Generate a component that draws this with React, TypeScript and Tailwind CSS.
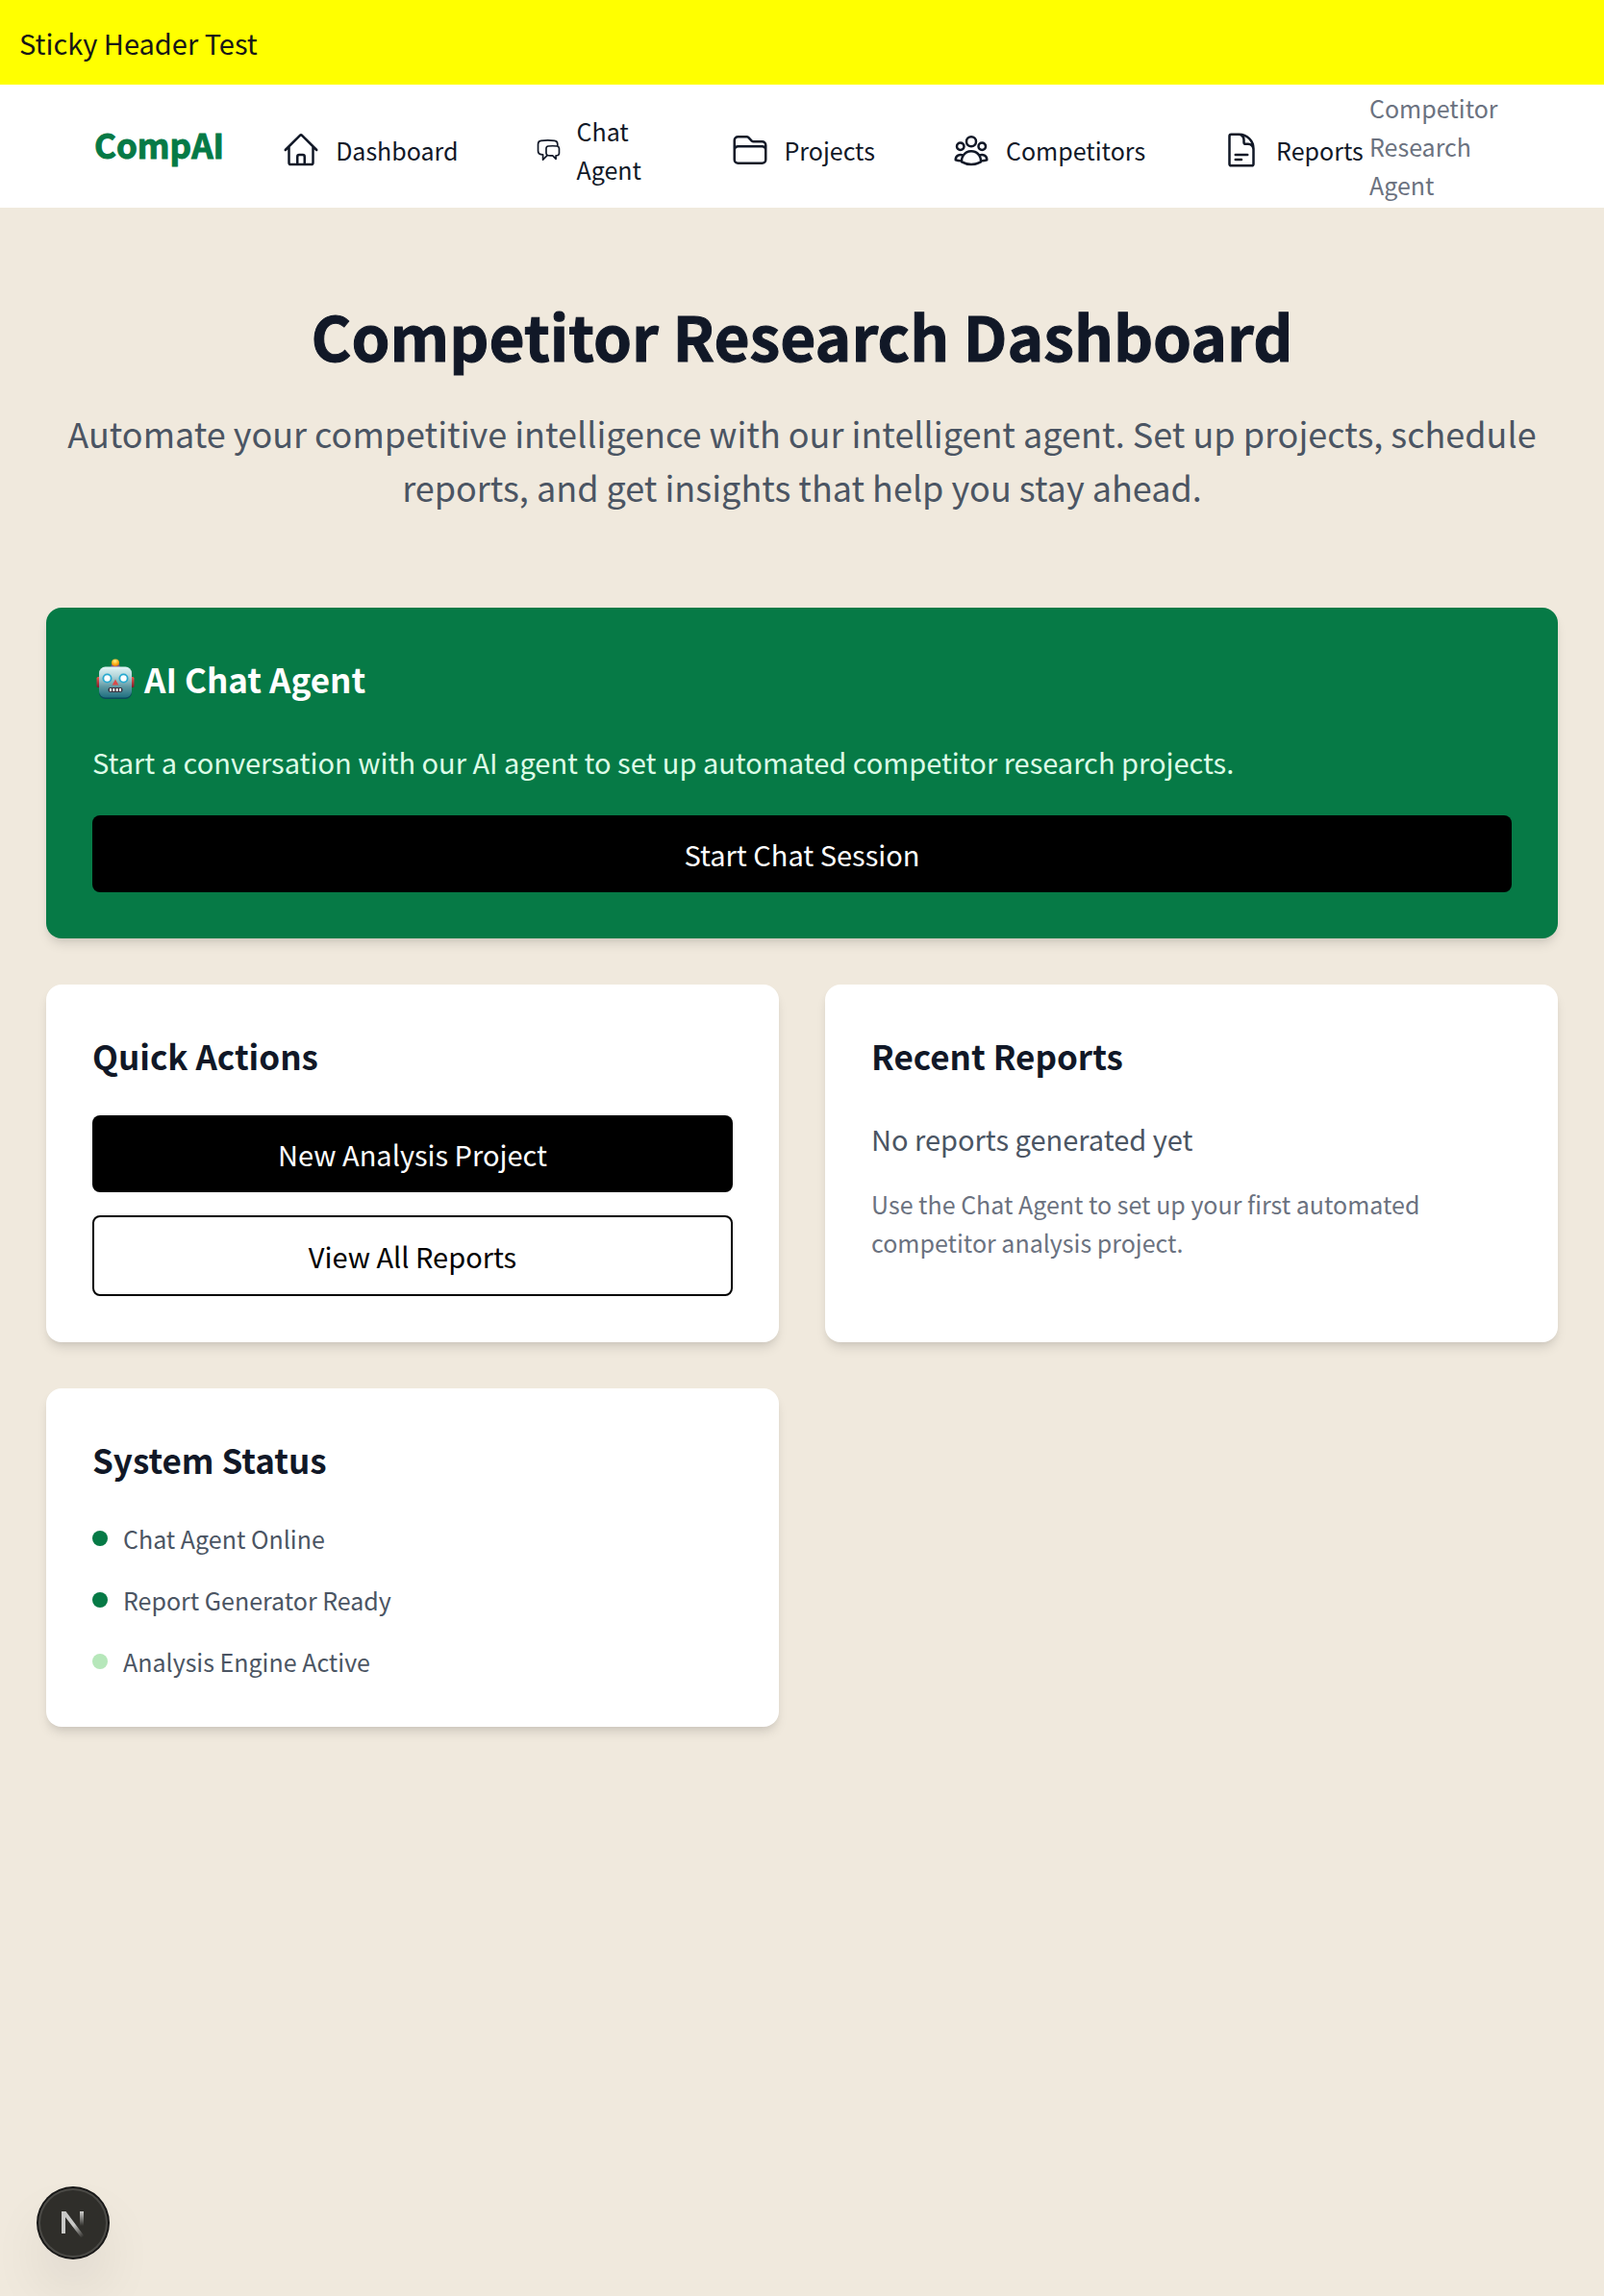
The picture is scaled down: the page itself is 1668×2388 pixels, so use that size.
import type { ReactNode } from "react";
import type { IconType } from "react-icons";
import {
  HiOutlineChatBubbleLeftRight,
  HiOutlineDocumentText,
  HiOutlineFolder,
  HiOutlineHome,
  HiOutlineUserGroup,
} from "react-icons/hi2";

type NavItem = { label: string; icon: IconType; iconClass: string; textClass: string };

const navItems: NavItem[] = [
  { label: "Dashboard", icon: HiOutlineHome, iconClass: "size-10", textClass: "" },
  { label: "Chat Agent", icon: HiOutlineChatBubbleLeftRight, iconClass: "h-10 w-[27px]", textClass: "w-20" },
  { label: "Projects", icon: HiOutlineFolder, iconClass: "size-10", textClass: "" },
  { label: "Competitors", icon: HiOutlineUserGroup, iconClass: "size-10", textClass: "" },
  { label: "Reports", icon: HiOutlineDocumentText, iconClass: "size-10", textClass: "" },
];

const statuses = [
  { label: "Chat Agent Online", dot: "bg-[#067a46]" },
  { label: "Report Generator Ready", dot: "bg-[#067a46]" },
  { label: "Analysis Engine Active", dot: "bg-[#b6e7ba]" },
];

function Robot() {
  return (
    <svg viewBox="0 0 40 42" className="h-[42px] w-10 shrink-0" role="img" aria-label="Robot">
      <defs>
        <linearGradient id="face" x1="0" y1="0" x2="0" y2="1">
          <stop offset="0" stopColor="#e2f5f6" />
          <stop offset="0.3" stopColor="#b4d6da" />
          <stop offset="0.65" stopColor="#5f98a3" />
          <stop offset="1" stopColor="#1f7080" />
        </linearGradient>
        <linearGradient id="ear" x1="0" y1="0" x2="0" y2="1">
          <stop offset="0" stopColor="#f0584e" />
          <stop offset="1" stopColor="#7e1a2a" />
        </linearGradient>
        <radialGradient id="bulb" cx="0.45" cy="0.3" r="0.7">
          <stop offset="0" stopColor="#fff08a" />
          <stop offset="0.6" stopColor="#fbb017" />
          <stop offset="1" stopColor="#dc7a12" />
        </radialGradient>
      </defs>
      <rect x="0.5" y="19" width="4" height="11" rx="1.5" fill="url(#ear)" />
      <rect x="35.5" y="19" width="4" height="11" rx="1.5" fill="url(#ear)" />
      <rect x="15.5" y="5.5" width="9" height="5" rx="2" fill="#75508f" />
      <ellipse cx="20" cy="4.2" rx="4" ry="3.8" fill="url(#bulb)" />
      <rect x="3" y="9" width="34" height="33" rx="6.5" fill="#0b4a5c" />
      <rect x="3" y="8.5" width="34" height="32" rx="6.5" fill="url(#face)" />
      <circle cx="11.5" cy="20.5" r="5" fill="#28a9cf" />
      <circle cx="28.5" cy="20.5" r="5" fill="#28a9cf" />
      <circle cx="11.5" cy="20.5" r="3.2" fill="#ffffff" />
      <circle cx="28.5" cy="20.5" r="3.2" fill="#ffffff" />
      <path d="M20 21.5l3.3 6h-6.6z" fill="#dc4a48" />
      <rect x="12.5" y="30" width="15" height="5" rx="2.2" fill="#3b3340" />
      <path d="M14 31h2v3h-2zM17.3 31h2v3h-2zM20.7 31h2v3h-2zM24 31h2v3h-2z" fill="#f7f4ee" />
    </svg>
  );
}

function Card({ title, children }: { title: string; children: ReactNode }) {
  return (
    <section className="rounded-2xl bg-white p-12 shadow-[0_8px_12px_-2px_rgba(0,0,0,0.1),0_4px_8px_-4px_rgba(0,0,0,0.1)]">
      <h2 className="mb-9 text-[35px] leading-[52px] font-bold">{title}</h2>
      {children}
    </section>
  );
}

export default function App() {
  return (
    <div
      lang="en"
      className="min-h-screen bg-[#f0e9dd] font-['Noto_Sans_CJK_SC',sans-serif] text-[29px] leading-[48px] text-[#111827]"
    >
      <div className="sticky top-0 z-10 bg-[#ffff00] p-5 text-[#171717]">Sticky Header Test</div>

      <header className="flex h-32 items-center bg-white px-24 text-[25px] leading-10">
        <a
          href="#"
          className="mr-[58px] px-0.5 pb-1 text-[35px] leading-[56px] font-bold text-[#067a46] [-webkit-text-stroke:1px_currentColor]"
        >
          CompAI
        </a>
        <nav className="flex items-center gap-20 pt-2">
          {navItems.map(({ label, icon: Icon, iconClass, textClass }) => (
            <a key={label} href="#" className="flex items-center gap-4">
              <Icon className={`shrink-0 ${iconClass}`} aria-hidden="true" />
              <span className={textClass}>{label}</span>
            </a>
          ))}
        </nav>
        <span className="ml-auto w-[148px] text-[#6b7280]">Competitor Research Agent</span>
      </header>

      <main className="px-12 py-24">
        <div className="mb-[98px] text-center">
          <h1 className="mb-[38px] text-[64px] leading-[72px] font-bold [-webkit-text-stroke:1px_currentColor]">
            Competitor Research Dashboard
          </h1>
          <p className="text-[36px] leading-[56px] text-[#4b5563]">
            Automate your competitive intelligence with our intelligent agent. Set up projects, schedule reports, and
            get insights that help you stay ahead.
          </p>
        </div>

        <section className="mb-12 rounded-2xl bg-[#067a46] p-12 text-white shadow-[0_8px_12px_-2px_rgba(0,0,0,0.1),0_4px_8px_-4px_rgba(0,0,0,0.1)]">
          <h2 className="mb-9 flex items-center gap-2.5 pl-1 text-[35px] leading-[52px] font-bold">
            <Robot />
            AI Chat Agent
          </h2>
          <p className="mb-8 text-[#dcfce7]">
            Start a conversation with our AI agent to set up automated competitor research projects.
          </p>
          <button type="button" className="w-full rounded-lg bg-black px-8 py-4">
            Start Chat Session
          </button>
        </section>

        <div className="grid grid-cols-2 gap-12">
          <Card title="Quick Actions">
            <div className="flex flex-col gap-6">
              <button type="button" className="w-full rounded-lg bg-black px-8 py-4 text-white">
                New Analysis Project
              </button>
              <button type="button" className="w-full rounded-lg border-2 border-black px-8 py-4 text-black">
                View All Reports
              </button>
            </div>
          </Card>

          <Card title="Recent Reports">
            <p className="mb-6 text-[#4b5563]">No reports generated yet</p>
            <p className="text-[25px] leading-10 text-[#6b7280]">
              Use the Chat Agent to set up your first automated competitor analysis project.
            </p>
          </Card>

          <Card title="System Status">
            <ul className="flex flex-col gap-6 text-[25px] leading-10 text-[#4b5563]">
              {statuses.map(({ label, dot }) => (
                <li key={label} className="flex items-center gap-4">
                  <span className={`size-4 rounded-full ${dot}`} />
                  {label}
                </li>
              ))}
            </ul>
          </Card>
        </div>
      </main>

      <button
        type="button"
        aria-label="Open Next.js Dev Tools"
        className="fixed bottom-10 left-10 flex size-[72px] items-center justify-center rounded-full bg-[#2f2e2a] shadow-[0_0_0_2px_#171717,inset_0_0_0_2px_#4b4a46,0_32px_64px_-16px_rgba(0,0,0,0.24)]"
      >
        <svg viewBox="0 0 26 30" className="h-[30px] w-[26px]" fill="none" aria-hidden="true">
          <defs>
            <linearGradient id="stem" x1="0" y1="0" x2="0" y2="18" gradientUnits="userSpaceOnUse">
              <stop offset="0.2" stopColor="#c9c9c7" />
              <stop offset="1" stopColor="#c9c9c7" stopOpacity="0" />
            </linearGradient>
            <linearGradient id="diagonal" x1="14" y1="17" x2="24" y2="29" gradientUnits="userSpaceOnUse">
              <stop offset="0" stopColor="#c9c9c7" />
              <stop offset="1" stopColor="#c9c9c7" stopOpacity="0" />
            </linearGradient>
          </defs>
          <path d="M20 3h4v16h-4z" fill="url(#stem)" />
          <path d="M1 26V3h4.500l19 25.500-3 2L5 9v17z" fill="url(#diagonal)" />
        </svg>
      </button>
    </div>
  );
}
